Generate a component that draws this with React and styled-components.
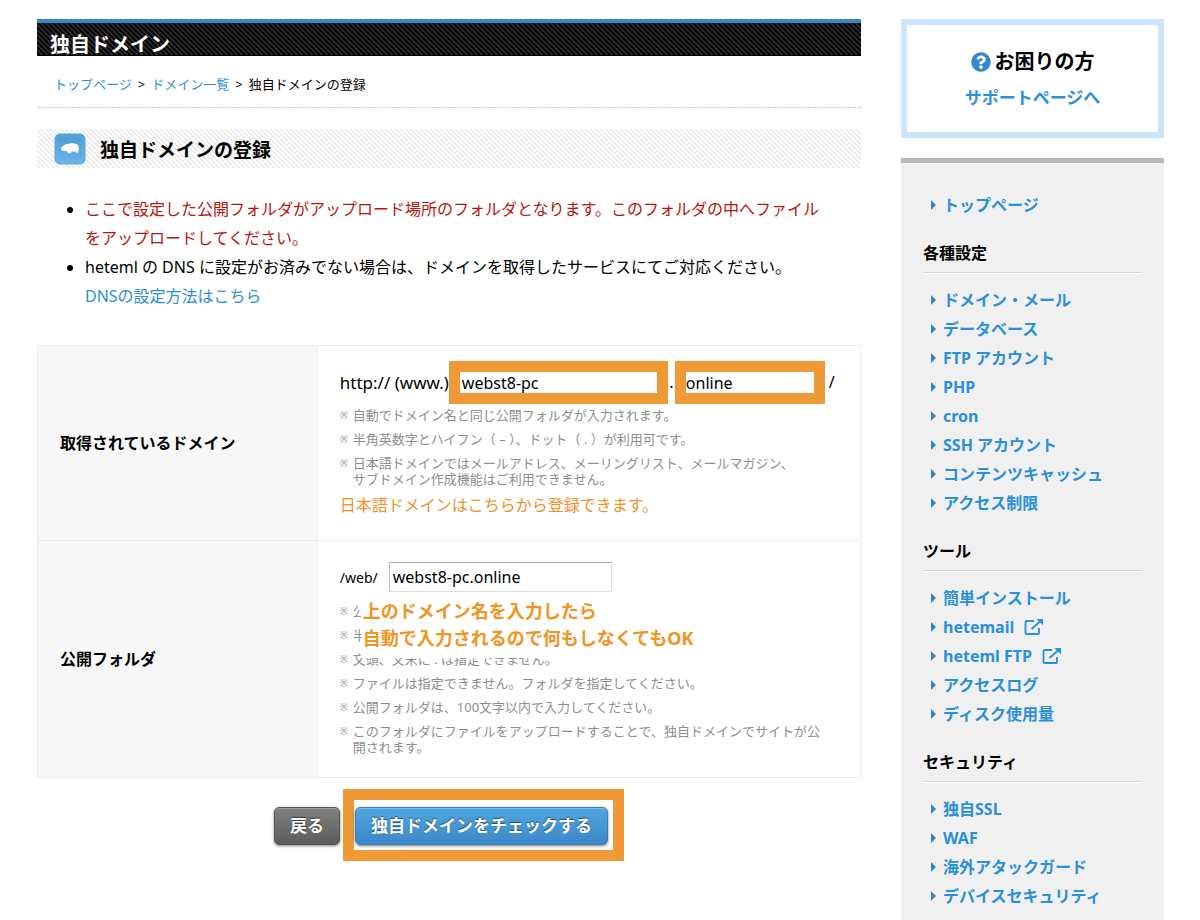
import React from "react";
import styled, { createGlobalStyle } from "styled-components";
import { FaQuestionCircle } from "react-icons/fa";

const blue = "#2b90d9";
const orange = "#f09a37";

const GlobalStyle = createGlobalStyle`
  * { box-sizing: border-box; }
  body {
    margin: 0;
    background: #fff;
    color: #000;
    font-family: "Noto Sans", "Noto Sans CJK JP", sans-serif;
    font-size: 16px;
    line-height: 29px;
  }
  h1, h2, h3, p, ul { margin: 0; padding: 0; }
  a { color: ${blue}; text-decoration: none; }
  input, button { font-family: inherit; }
`;

const Page = styled.div`
  display: grid;
  grid-template-columns: minmax(0, 1fr) 263px;
  gap: 40px;
  min-height: 100vh;
  padding: 19px 36px 0 37px;
`;

const TitleBar = styled.h1`
  height: 37px;
  padding: 8px 13px 0;
  overflow: hidden;
  border-top: 4px solid #3a87c8;
  border-bottom: 1px solid #000;
  background-color: #111;
  background-image: linear-gradient(45deg, #060606 25%, #303030 25%, #303030 50%, #060606 50%, #060606 75%, #303030 75%);
  background-size: 5px 5px;
  color: #fff;
  font-size: 20px;
  line-height: 28px;
`;

const Breadcrumb = styled.nav`
  display: flex;
  gap: 6px;
  height: 52px;
  padding: 18px 17px 0;
  border-bottom: 1px dashed #ccc;
  font-size: 13px;
  line-height: 20px;
`;

const SectionTitle = styled.h2`
  display: flex;
  align-items: center;
  gap: 14px;
  height: 39px;
  margin-top: 21px;
  padding: 0 17px;
  background-image: linear-gradient(45deg, #fcfcfc 25%, #ebebeb 25%, #ebebeb 50%, #fcfcfc 50%, #fcfcfc 75%, #ebebeb 75%);
  background-size: 5px 5px;
  font-size: 19px;
  line-height: 28px;

  span { padding-top: 3px; }
`;

const Intro = styled.ul`
  margin-top: 27px;
  padding: 0 36px 0 48px;
`;

const IntroItem = styled.li`
  color: ${(p) => (p.$alert ? "#b81410" : "#000")};
  &::marker { color: #000; }
`;

const FormTable = styled.table`
  width: 100%;
  margin-top: 34px;
  border-collapse: collapse;
  border: 1px solid #ececec;
`;

const LabelCell = styled.th`
  width: 34%;
  padding: 0 22px;
  border: 1px solid #ececec;
  background: #f7f7f7;
  text-align: left;
  vertical-align: middle;
`;

const FieldCell = styled.td`
  padding: ${(p) => p.$pad} 22px;
  border: 1px solid #ececec;
  vertical-align: top;
`;

const DomainRow = styled.div`
  display: flex;
  align-items: center;
  height: 43px;
  white-space: nowrap;
`;

const Scheme = styled.span`
  flex: 0 0 108px;
  font-size: 17px;
`;

const Dot = styled.span`
  flex: 0 0 7px;
  text-align: center;
`;

const MarkedInput = styled.input`
  position: relative;
  flex: 0 0 ${(p) => p.$width};
  width: ${(p) => p.$width};
  height: 43px;
  padding: 0 ${(p) => p.$inset};
  border: 11px solid ${orange};
  border-radius: 0;
  background: #fff;
  font-size: 16px;
  line-height: 20px;
`;

const Slash = styled.span`
  padding-left: 4px;
`;

const FolderRow = styled.div`
  display: flex;
  align-items: center;
  gap: 11px;
  font-size: 14px;
`;

const FolderInput = styled.input`
  width: 223px;
  height: 30px;
  padding: 0 3px;
  border: 1px solid #ddd;
  border-top-color: #aaa;
  border-left-color: #bbb;
  font-size: 16px;
`;

const Notes = styled.ul`
  display: flex;
  flex-direction: column;
  gap: 8px;
  margin-top: ${(p) => p.$top};
  padding-right: 6px;
  list-style: none;
  color: #8e8e8e;
  font-size: 13px;
  line-height: 16px;
`;

const NoteItem = styled.li`
  display: grid;
  grid-template-columns: 13px minmax(0, 1fr);
  &::before { content: "※"; font-size: 10px; }
`;

const IdnLink = styled.a`
  display: block;
  margin-top: 8px;
  color: #f0912a;
  line-height: 20px;
`;

const NotesArea = styled.div`
  position: relative;
`;

const Annotation = styled.p`
  position: absolute;
  top: -6px;
  left: 21px;
  padding: 1px 2px 0;
  background: #fff;
  color: #f2941d;
  font-size: 18px;
  font-weight: 700;
  line-height: 27px;
  height: 61px;
  white-space: nowrap;
`;

const Actions = styled.div`
  display: flex;
  justify-content: center;
  align-items: flex-start;
  gap: 3px;
  padding: 11px 0 59px;
`;

const BackWrap = styled.div`
  padding-top: 18px;
`;

const SubmitRing = styled.div`
  padding: 7px 5px 5px 1px;
  border: 11px solid ${orange};
`;

const Button = styled.button`
  display: block;
  height: 38px;
  padding: 0 15px;
  border: 1px solid ${(p) => (p.$primary ? "#3a80b8" : "#555")};
  border-radius: 5px;
  background: ${(p) =>
    p.$primary ? "linear-gradient(#50a5de, #3c89c9)" : "linear-gradient(#808080, #5c5c5c)"};
  box-shadow: inset 0 1px 0 rgba(255, 255, 255, 0.25), 0 1px 3px rgba(0, 0, 0, 0.5);
  color: #fff;
  font-size: 17px;
  font-weight: 700;
  line-height: 24px;
  text-shadow: 0 -1px 1px rgba(0, 0, 0, 0.5);
  white-space: nowrap;
`;

const Side = styled.aside`
  display: flex;
  flex-direction: column;
  gap: 20px;
`;

const HelpBox = styled.section`
  height: 119px;
  padding: 20px 0 0;
  border: 6px solid #cce4fc;
  text-align: center;
`;

const HelpTitle = styled.h2`
  display: flex;
  justify-content: center;
  align-items: center;
  gap: 4px;
  font-size: 20px;
  line-height: 34px;
  svg { color: #3489cb; }
`;

const HelpLink = styled.a`
  display: block;
  font-size: 17px;
  font-weight: 700;
  line-height: 38px;
`;

const SideNav = styled.nav`
  flex: 1;
  padding: 27px 22px 10px;
  border-top: 5px solid #b9b9b9;
  background: #f0f0f0;
`;

const NavHeading = styled.h3`
  margin: 22px 0 12px;
  padding-bottom: 6px;
  border-bottom: 1px solid #d8d8d8;
  box-shadow: 0 1px 0 #fff;
  font-size: 16px;
  line-height: 25px;
`;

const NavList = styled.ul`
  list-style: none;
  padding-left: 8px;
`;

const NavLink = styled.a`
  display: flex;
  align-items: center;
  height: 29px;
  padding-top: 1px;
  font-weight: 700;
  &::before {
    content: "";
    margin-right: 7px;
    border: 5px solid transparent;
    border-left-color: #2f86c8;
    border-right-width: 0;
  }
  svg { margin-left: 10px; }
`;

const ExternalIcon = () => (
  <svg width="20" height="18" viewBox="0 0 20 18" fill="none" aria-hidden="true">
    <path d="M10 3H2.6Q1.5 3 1.5 4V15Q1.5 16 2.6 16H14Q15 16 15 15V10" stroke="currentColor" strokeWidth="1.8" />
    <path d="M7.5 11L16 3.6" stroke="currentColor" strokeWidth="2" />
    <path d="M12.4 1H19V7.2Z" fill="currentColor" />
  </svg>
);

const HippoIcon = () => (
  <svg width="32" height="32" viewBox="0 0 32 32" aria-hidden="true">
    <defs>
      <linearGradient id="badge" x1="0" y1="0" x2="0" y2="1">
        <stop offset="0" stopColor="#4a9bd6" />
        <stop offset="1" stopColor="#6db3e4" />
      </linearGradient>
    </defs>
    <rect x="1" y="1" width="30" height="30" rx="5" fill="url(#badge)" stroke="#5fa8dc" strokeWidth="1" />
    <rect x="3" y="3" width="26" height="26" rx="3" fill="none" stroke="#7bbbe8" strokeWidth="0.8" opacity="0.5" />
    <path
      d="M7 15.500C7.200 13.500 9.200 13.200 10.800 12C11.600 10.600 12.600 10.800 13.400 11.300C16 10.200 20 9.900 22.500 10.900C24.600 11.700 25 14 24.800 16L24.200 19.600H21.600L21.300 18.600H17.500L17 20.200H14L13 18.200C11 17.800 8 18.200 7 16.800Z"
      fill="#fff"
    />
  </svg>
);

const navGroups = [
  {
    title: "各種設定",
    items: ["ドメイン・メール", "データベース", "FTP アカウント", "PHP", "cron", "SSH アカウント", "コンテンツキャッシュ", "アクセス制限"],
  },
  {
    title: "ツール",
    items: ["簡単インストール", "hetemail", "heteml FTP", "アクセスログ", "ディスク使用量"],
  },
  {
    title: "セキュリティ",
    items: ["独自SSL", "WAF", "海外アタックガード", "デバイスセキュリティ"],
  },
];
const external = ["hetemail", "heteml FTP"];

const NavItem = ({ label }) => (
  <li>
    <NavLink href="#">
      {label}
      {external.includes(label) && <ExternalIcon />}
    </NavLink>
  </li>
);

const Note = ({ children }) => (
  <NoteItem>
    <span>{children}</span>
  </NoteItem>
);

export default function App() {
  return (
    <>
      <GlobalStyle />
      <Page lang="ja">
        <main>
          <TitleBar>独自ドメイン</TitleBar>
          <Breadcrumb>
            <a href="#">トップページ</a>
            <span>&gt;</span>
            <a href="#">ドメイン一覧</a>
            <span>&gt;</span>
            <span>独自ドメインの登録</span>
          </Breadcrumb>
          <SectionTitle>
            <HippoIcon />
            <span>独自ドメインの登録</span>
          </SectionTitle>
          <Intro>
            <IntroItem $alert>
              ここで設定した公開フォルダがアップロード場所のフォルダとなります。このフォルダの中へファイルをアップロードしてください。
            </IntroItem>
            <IntroItem>
              heteml の DNS に設定がお済みでない場合は、ドメインを取得したサービスにてご対応ください。
              <br />
              <a href="#">DNSの設定方法はこちら</a>
            </IntroItem>
          </Intro>
          <FormTable>
            <tbody>
              <tr>
                <LabelCell scope="row">
                  <label htmlFor="domain">取得されているドメイン</label>
                </LabelCell>
                <FieldCell $pad="15px 22px 25px">
                  <DomainRow>
                    <Scheme>http:// (www.)</Scheme>
                    <MarkedInput id="domain" $width="219px" $inset="2px" defaultValue="webst8-pc" />
                    <Dot>.</Dot>
                    <MarkedInput aria-label="トップレベルドメイン" $width="150px" $inset="0" defaultValue="online" />
                    <Slash>/</Slash>
                  </DomainRow>
                  <Notes $top="3px">
                    <Note>自動でドメイン名と同じ公開フォルダが入力されます。</Note>
                    <Note>半角英数字とハイフン（ – ）、ドット（ . ）が利用可です。</Note>
                    <Note>
                      日本語ドメインではメールアドレス、メーリングリスト、メールマガジン、
                      <br />
                      サブドメイン作成機能はご利用できません。
                    </Note>
                  </Notes>
                  <IdnLink href="#">日本語ドメインはこちらから登録できます。</IdnLink>
                </FieldCell>
              </tr>
              <tr>
                <LabelCell scope="row">
                  <label htmlFor="folder">公開フォルダ</label>
                </LabelCell>
                <FieldCell $pad="21px 22px 22px">
                  <FolderRow>
                    <span>/web/</span>
                    <FolderInput id="folder" defaultValue="webst8-pc.online" />
                  </FolderRow>
                  <NotesArea>
                    <Notes $top="11px">
                      <Note>公</Note>
                      <Note>半</Note>
                      <Note>文頭、文末に . は指定できません。</Note>
                      <Note>ファイルは指定できません。フォルダを指定してください。</Note>
                      <Note>公開フォルダは、100文字以内で入力してください。</Note>
                      <Note>このフォルダにファイルをアップロードすることで、独自ドメインでサイトが公開されます。</Note>
                    </Notes>
                    <Annotation>
                      上のドメイン名を入力したら
                      <br />
                      自動で入力されるので何もしなくてもOK
                    </Annotation>
                  </NotesArea>
                </FieldCell>
              </tr>
            </tbody>
          </FormTable>
          <Actions>
            <BackWrap>
              <Button type="button">戻る</Button>
            </BackWrap>
            <SubmitRing>
              <Button type="submit" $primary>
                独自ドメインをチェックする
              </Button>
            </SubmitRing>
          </Actions>
        </main>
        <Side>
          <HelpBox>
            <HelpTitle>
              <FaQuestionCircle size={20} />
              お困りの方
            </HelpTitle>
            <HelpLink href="#">サポートページへ</HelpLink>
          </HelpBox>
          <SideNav>
            <NavList>
              <NavItem label="トップページ" />
            </NavList>
            {navGroups.map((group) => (
              <React.Fragment key={group.title}>
                <NavHeading>{group.title}</NavHeading>
                <NavList>
                  {group.items.map((label) => (
                    <NavItem key={label} label={label} />
                  ))}
                </NavList>
              </React.Fragment>
            ))}
          </SideNav>
        </Side>
      </Page>
    </>
  );
}
